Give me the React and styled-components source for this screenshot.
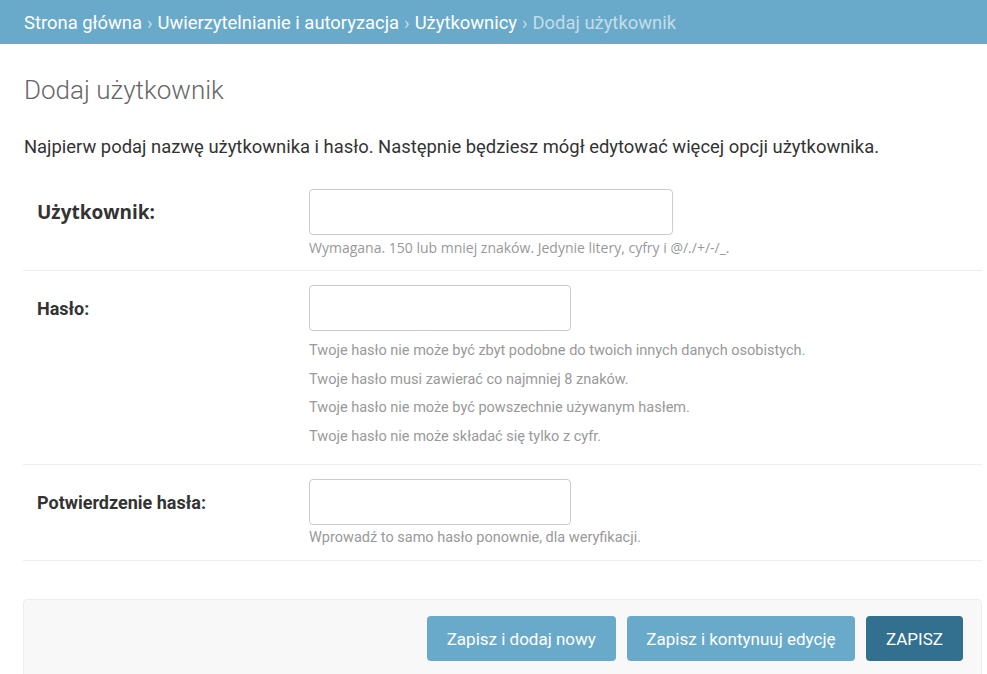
import React from 'react'
import styled, {createGlobalStyle} from 'styled-components'

const GlobalStyle = createGlobalStyle`
  body {
    margin: 0;
    background: #fff;
    font-family: Roboto, "Liberation Sans", sans-serif;
    color: #333;
  }
`

const Breadcrumbs = styled.div`
  background: #69aaca;
  height: 44px;
  padding: 0 24px;
  display: flex;
  align-items: center;
  font-size: 18.4px;
  color: #c4dce8;
  white-space: nowrap;
`

const Crumb = styled.a`
  color: #fff;
  text-decoration: none;
`

const Sep = styled.span`
  color: #c4dce8;
  margin: 0 5px;
`

const Content = styled.div`
  padding: 0 5px 0 23px;
`

const Title = styled.h1`
  margin: 0;
  padding: 30px 0 0 1px;
  font-size: 26px;
  font-weight: 300;
  color: #666;
  line-height: 32px;
`

const Intro = styled.p`
  margin: 0;
  padding: 29px 0 0 1px;
  font-size: 18.4px;
  line-height: 24px;
  color: #333;
`

const Fieldset = styled.div`
  margin-top: 16px;
`

const FormRow = styled.div`
  display: flex;
  padding: 14px 14px 13px;
  border-bottom: 1px solid #eee;
`

// the first row renders in a wider face in the reference
const Label = styled.label`
  width: 272px;
  flex: none;
  height: 46px;
  display: flex;
  align-items: center;
  font-family: ${p => (p.$wide ? '"Open Sans", Roboto, sans-serif' : 'Roboto, sans-serif')};
  font-size: ${p => (p.$wide ? 19 : 18)}px;
  font-weight: 700;
  color: #333;
`

const Field = styled.div`
  display: flex;
  flex-direction: column;
`

const Input = styled.input`
  box-sizing: border-box;
  width: ${p => p.$w}px;
  height: 46px;
  border: 1px solid #ccc;
  border-radius: 4px;
  background: #fff;
  margin: 0;
`

const Help = styled.div`
  font-family: ${p => (p.$wide ? '"Open Sans", Roboto, sans-serif' : 'Roboto, sans-serif')};
  font-size: ${p => (p.$wide ? 14 : 14.5)}px;
  line-height: 18px;
  color: #999;
  margin-top: 4px;
`

const HelpList = styled.div`
  display: flex;
  flex-direction: column;
  gap: 10.7px;
  margin-top: 11px;
  padding-bottom: 5px;
  font-size: 14.5px;
  line-height: 18px;
  color: #999;
`

const SubmitRow = styled.div`
  margin-top: 38px;
  background: #f8f8f8;
  border: 1px solid #eee;
  border-radius: 4px;
  padding: 16px 18px 16px;
  display: flex;
  justify-content: flex-end;
  gap: 11px;
  height: 80px;
  box-sizing: border-box;
`

const Button = styled.button`
  height: 45px;
  padding: 0 ${p => p.$pad}px;
  border: none;
  border-radius: 4px;
  background: ${p => (p.$primary ? '#336f8f' : '#69aaca')};
  color: #fff;
  font-family: Roboto, "Liberation Sans", sans-serif;
  font-size: 17px;
  cursor: pointer;
`

const App = () => (
  <>
    <GlobalStyle />
    <Breadcrumbs>
      <Crumb href="#">Strona główna</Crumb>
      <Sep>›</Sep>
      <Crumb href="#">Uwierzytelnianie i autoryzacja</Crumb>
      <Sep>›</Sep>
      <Crumb href="#">Użytkownicy</Crumb>
      <Sep>›</Sep>
      Dodaj użytkownik
    </Breadcrumbs>
    <Content>
      <Title>Dodaj użytkownik</Title>
      <Intro>
        Najpierw podaj nazwę użytkownika i hasło. Następnie będziesz mógł edytować więcej opcji użytkownika.
      </Intro>
      <Fieldset>
        <FormRow>
          <Label $wide>Użytkownik:</Label>
          <Field>
            <Input $w={364} type="text" />
            <Help $wide>Wymagana. 150 lub mniej znaków. Jedynie litery, cyfry i @/./+/-/_.</Help>
          </Field>
        </FormRow>
        <FormRow>
          <Label>Hasło:</Label>
          <Field>
            <Input $w={262} type="password" />
            <HelpList>
              <span>Twoje hasło nie może być zbyt podobne do twoich innych danych osobistych.</span>
              <span>Twoje hasło musi zawierać co najmniej 8 znaków.</span>
              <span>Twoje hasło nie może być powszechnie używanym hasłem.</span>
              <span>Twoje hasło nie może składać się tylko z cyfr.</span>
            </HelpList>
          </Field>
        </FormRow>
        <FormRow>
          <Label>Potwierdzenie hasła:</Label>
          <Field>
            <Input $w={262} type="password" />
            <Help>Wprowadź to samo hasło ponownie, dla weryfikacji.</Help>
          </Field>
        </FormRow>
      </Fieldset>
      <SubmitRow>
        <Button $pad={20}>Zapisz i dodaj nowy</Button>
        <Button $pad={19.5}>Zapisz i kontynuuj edycję</Button>
        <Button $pad={20} $primary>ZAPISZ</Button>
      </SubmitRow>
    </Content>
  </>
)

export default App
